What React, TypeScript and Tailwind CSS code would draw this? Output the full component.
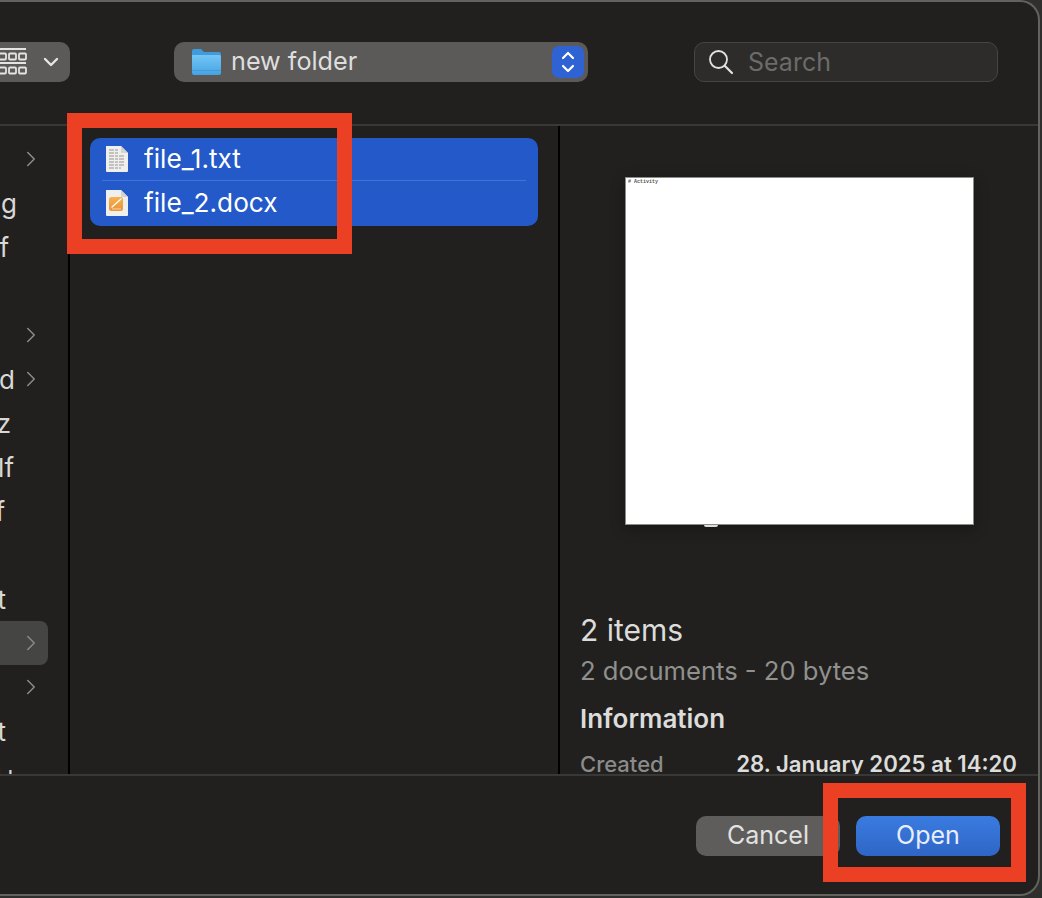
import { ChevronRight } from 'lucide-react';

const sidebarRows = [
  { text: '', chevron: true, textClass: 'w-0', active: false },
  { text: 'g', chevron: false, textClass: 'w-[17px]', active: false },
  { text: 'f', chevron: false, textClass: 'w-[9px]', active: false },
  { text: '', chevron: false, textClass: 'w-0', active: false },
  { text: '', chevron: true, textClass: 'w-0', active: false },
  { text: 'd', chevron: true, textClass: 'w-[15px]', active: false },
  { text: 'z', chevron: false, textClass: 'w-[11px]', active: false },
  { text: 'lf', chevron: false, textClass: 'w-[14px]', active: false },
  { text: 'f', chevron: false, textClass: 'w-[5px]', active: false },
  { text: '', chevron: false, textClass: 'w-0', active: false },
  { text: 't', chevron: false, textClass: 'w-[6px]', active: false },
  { text: '', chevron: true, textClass: 'w-0', active: true },
  { text: '', chevron: true, textClass: 'w-0', active: false },
  { text: 't', chevron: false, textClass: 'w-[6px]', active: false },
  { text: 'N+', chevron: false, textClass: 'w-[19px]', active: false },
];

function ViewGridIcon() {
  return (
    <svg width="28" height="28" viewBox="0 0 28 28" fill="none" stroke="#e4e4e3" strokeWidth="1.800" className="shrink-0">
      <path d="M0 1h26M0 15h26" />
      <rect x="-2" y="5.500" width="8" height="6" rx="1" />
      <rect x="9" y="5.500" width="7" height="6" rx="1" />
      <rect x="19" y="5.500" width="7" height="6" rx="1" />
      <rect x="-2" y="19.500" width="8" height="6" rx="1" />
      <rect x="9" y="19.500" width="7" height="6" rx="1" />
      <rect x="19" y="19.500" width="7" height="6" rx="1" />
    </svg>
  );
}

function FolderIcon() {
  return (
    <svg width="29" height="28" viewBox="0 0 29 28" className="shrink-0">
      <defs>
        <linearGradient id="folderBody" x1="0" y1="0" x2="0" y2="1">
          <stop offset="0" stopColor="#74c6f5" />
          <stop offset="1" stopColor="#45a3e3" />
        </linearGradient>
      </defs>
      <path d="M0 3a2 2 0 0 1 2-2h7l3 3h15a2 2 0 0 1 2 2v5H0z" fill="#3f9bdc" />
      <path d="M0 7h27a2 2 0 0 1 2 2v16a2 2 0 0 1-2 2H2a2 2 0 0 1-2-2z" fill="url(#folderBody)" />
      <path d="M0 22h29v1H0z" fill="#3a93d6" opacity="0.6" />
    </svg>
  );
}

function TextDocIcon() {
  return (
    <svg width="24" height="28" viewBox="0 0 24 28" className="shrink-0">
      <path d="M1 1h15l7 7v18a1 1 0 0 1-1 1H2a1 1 0 0 1-1-1z" fill="#efefee" />
      <path d="M16 1l7 7h-6a1 1 0 0 1-1-1z" fill="#d3d3d2" />
      <path
        d="M4 5h9M4 8h9M4 11h15M4 14h15M4 17h15M4 20h15M4 23h12"
        stroke="#b4b4b3"
        strokeWidth="1.400"
        strokeDasharray="5 1 3 1"
      />
    </svg>
  );
}

function PagesDocIcon() {
  return (
    <svg width="24" height="28" viewBox="0 0 24 28" className="shrink-0">
      <defs>
        <linearGradient id="pagesBody" x1="0" y1="0" x2="0" y2="1">
          <stop offset="0" stopColor="#f5b24e" />
          <stop offset="1" stopColor="#ec9238" />
        </linearGradient>
      </defs>
      <path d="M1 1h15l7 7v18a1 1 0 0 1-1 1H2a1 1 0 0 1-1-1z" fill="#efefee" />
      <path d="M16 1l7 7h-6a1 1 0 0 1-1-1z" fill="#d3d3d2" />
      <rect x="4" y="8" width="14" height="14" rx="2.500" fill="url(#pagesBody)" />
      <path d="M7 18l9-8" stroke="#fff" strokeWidth="1.300" strokeLinecap="round" />
      <path d="M7 20h9" stroke="#fbe0b8" strokeWidth="0.800" />
    </svg>
  );
}

function SidebarRow({ text, chevron, textClass, active }: (typeof sidebarRows)[number]) {
  return (
    <div className={`flex h-[44px] w-[48px] shrink-0 items-center overflow-hidden ${active ? 'rounded-r-[8px] bg-[#454544]' : ''}`}>
      <span className={`flex shrink-0 justify-end text-[26px] text-[#d8d8d7] ${textClass}`}>{text}</span>
      {chevron && (
        <ChevronRight size={26} strokeWidth={1.400} className="absolute left-[18px] text-[#8a8a88]" />
      )}
    </div>
  );
}

function Marker({ className }: { className: string }) {
  return <div className={`absolute border-[15px] border-[#eb4024] ${className}`} />;
}

export default function App() {
  return (
    <div className="relative h-[898px] w-[1042px] overflow-hidden bg-[#2f2f2d] font-['Inter','Liberation_Sans',sans-serif]">
      <div className="flex h-[896px] w-[1040px] flex-col overflow-hidden rounded-r-[20px] border-t-2 border-r-2 border-b-2 border-[#62625f] bg-[#21201e]">
        {/* Toolbar */}
        <header className="flex h-[124px] shrink-0 items-start border-b-2 border-[#383836] pt-[40px]">
          <div className="flex h-[40px] w-[70px] items-center rounded-r-[10px] bg-[#5b5a58]">
            <ViewGridIcon />
            <svg width="16" height="12" viewBox="0 0 16 12" fill="none" stroke="#e6e6e5" strokeWidth="2.400" className="ml-[15px]" strokeLinecap="round" strokeLinejoin="round">
              <path d="M2 3l6 6 6-6" />
            </svg>
          </div>
          <div className="ml-[104px] flex h-[40px] w-[414px] items-center rounded-[10px] bg-[#5b5a58] pl-[18px] pr-[4px]">
            <FolderIcon />
            <span className="ml-[10px] text-[25.200px] leading-none text-[#dedede]">new folder</span>
            <div className="ml-auto flex h-[32px] w-[32px] items-center justify-center rounded-[7px] bg-[#2f62d3]">
              <svg width="16" height="26" viewBox="0 0 16 26" fill="none" stroke="#fff" strokeWidth="2.200" strokeLinecap="round" strokeLinejoin="round">
                <path d="M3 9l5-5 5 5M3 17l5 5 5-5" />
              </svg>
            </div>
          </div>
          <div className="ml-[106px] flex h-[40px] w-[304px] items-center rounded-[10px] border border-[#454543] bg-[#2d2c2b] pl-[13px]">
            <svg width="26" height="26" viewBox="0 0 26 26" fill="none" stroke="#e2e2e1" strokeWidth="1.800" strokeLinecap="round">
              <circle cx="10.500" cy="10.500" r="8.500" />
              <path d="M17 17l7 7" strokeWidth="2.200" />
            </svg>
            <span className="ml-[14px] text-[25px] leading-none text-[#6b6b69]">Search</span>
          </div>
        </header>

        {/* Columns */}
        <main className="flex min-h-0 flex-1">
          <aside className="relative h-full w-[68px] shrink-0 overflow-hidden pt-[11px]">
            {sidebarRows.map((row, i) => (
              <div key={i} className="relative flex items-center">
                <SidebarRow {...row} />
              </div>
            ))}
          </aside>
          <section className="w-[492px] shrink-0 border-x-2 border-black px-[20px] pt-[12px]">
            <div className="flex h-[88px] flex-col rounded-[10px] bg-[#2359c9] px-[12px]">
              <div className="flex h-[43px] items-center gap-[15px] border-b border-[#4173d8] pl-[3px]">
                <TextDocIcon />
                <span className="text-[26.200px] leading-none text-white">file_1.txt</span>
              </div>
              <div className="flex h-[44px] items-center gap-[15px] pl-[3px]">
                <PagesDocIcon />
                <span className="text-[26.200px] leading-none text-white">file_2.docx</span>
              </div>
            </div>
          </section>
          <section className="min-w-0 flex-1 overflow-hidden pl-[20px] pr-[21px]">
            <div className="relative ml-[45px] mt-[51px] h-[348px] w-[349px] border border-[#8b8b8a] bg-white pl-[2px] pt-[1px] font-['Liberation_Mono',monospace] text-[5px] leading-[6px] font-bold text-[#555] shadow-[0_4px_14px_rgba(0,0,0,0.3)]">
              # Activity
              <div className="absolute bottom-[-3px] left-[78px] h-[2px] w-[14px] rounded-b-full bg-[#dddddc]" />
            </div>
            <p className="mt-[87px] text-[30px] leading-[36px] text-[#dcdcdb]">2 items</p>
            <p className="mt-[5px] text-[25.600px] leading-[36px] text-[#90908e]">2 documents - 20 bytes</p>
            <p className="mt-[12px] text-[26px] leading-[36px] font-semibold text-[#dcdcdb]">Information</p>
            <div className="mt-[9px] flex items-center justify-between">
              <span className="text-[22px] leading-[36px] font-medium text-[#8b8b89]">Created</span>
              <span className="text-[22.200px] leading-[36px] font-semibold text-[#dcdcdb]">28. January 2025 at 14:20</span>
            </div>
          </section>
        </main>

        {/* Footer buttons */}
        <footer className="flex h-[120px] shrink-0 items-start justify-end gap-[16px] border-t-2 border-[#383836] pr-[38px] pt-[40px]">
          <button className="h-[40px] w-[144px] rounded-[10px] bg-[#5e5d5b] pb-[2px] text-[25px] leading-none text-[#e2e2e1]">Cancel</button>
          <button className="h-[40px] w-[144px] rounded-[10px] bg-gradient-to-b from-[#3a7be0] to-[#2f66c6] pb-[2px] text-[25px] leading-none text-[#e8eefb]">Open</button>
        </footer>
      </div>

      <Marker className="left-[67px] top-[113px] h-[141px] w-[285px]" />
      <Marker className="left-[823px] top-[783px] h-[99px] w-[203px]" />
    </div>
  );
}
